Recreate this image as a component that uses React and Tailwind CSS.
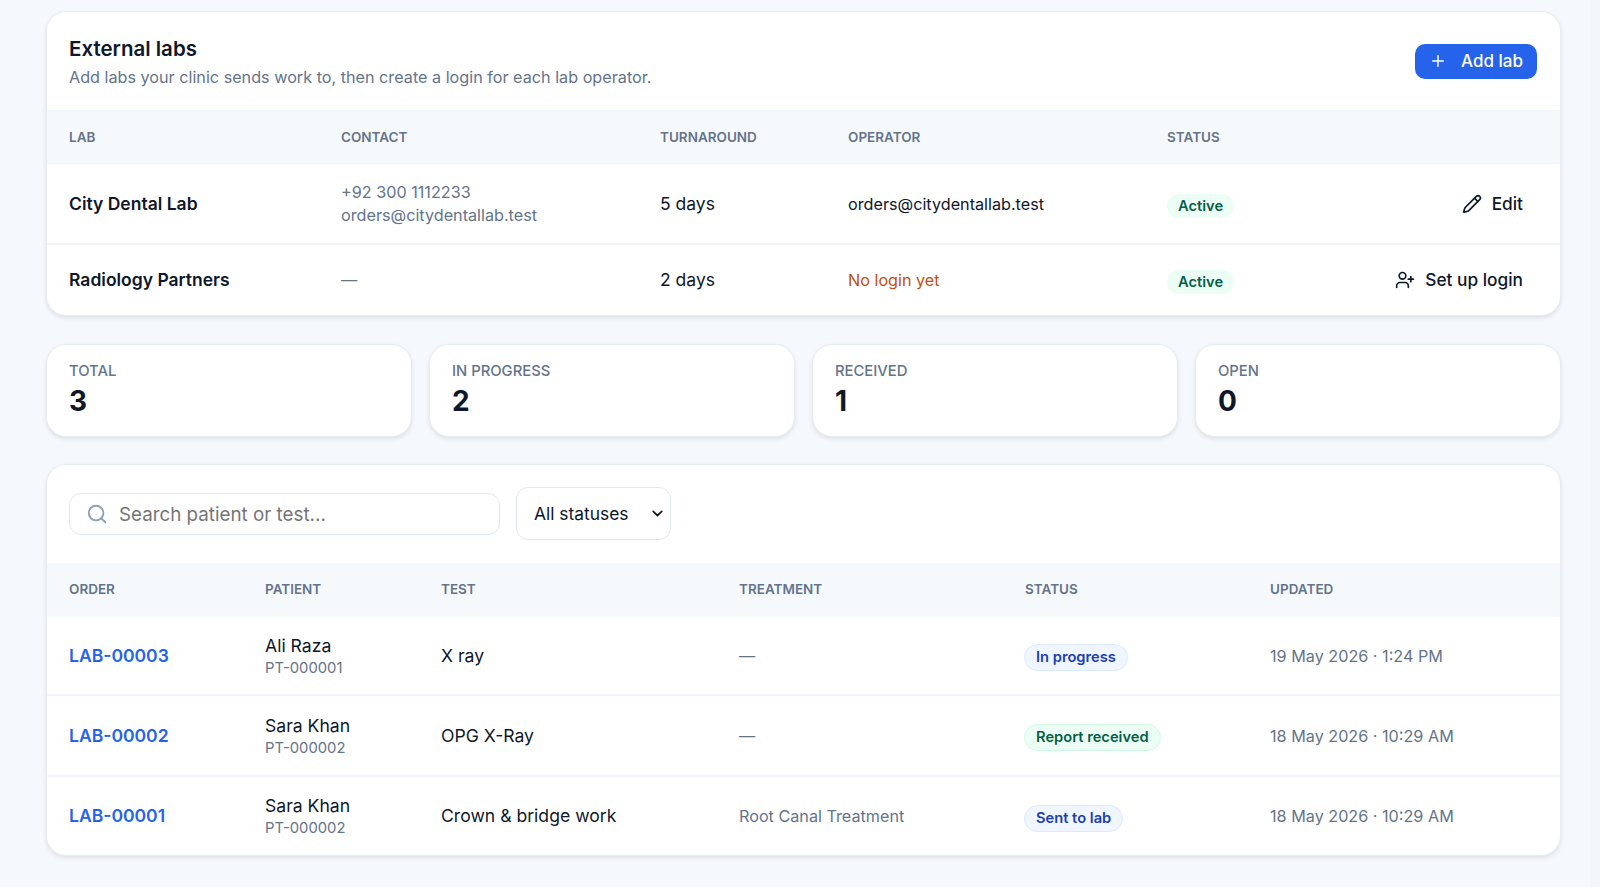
import { ChevronDown, Pencil, Plus, Search, UserPlus } from "lucide-react";

const labs = [
  {
    name: "City Dental Lab",
    phone: "+92 300 1112233",
    email: "orders@citydentallab.test",
    turnaround: "5 days",
    operator: "orders@citydentallab.test",
    action: "Edit",
  },
  {
    name: "Radiology Partners",
    turnaround: "2 days",
    action: "Set up login",
  },
];

const stats = [
  { label: "Total", value: 3 },
  { label: "In progress", value: 2 },
  { label: "Received", value: 1 },
  { label: "Open", value: 0 },
];

const orders = [
  { id: "LAB-00003", patient: "Ali Raza", code: "PT-000001", test: "X ray", status: "In progress", updated: "19 May 2026 · 1:24 PM", height: "h-[78px]" },
  { id: "LAB-00002", patient: "Sara Khan", code: "PT-000002", test: "OPG X-Ray", status: "Report received", updated: "18 May 2026 · 10:29 AM", height: "h-[81px]" },
  { id: "LAB-00001", patient: "Sara Khan", code: "PT-000002", test: "Crown & bridge work", treatment: "Root Canal Treatment", status: "Sent to lab", updated: "18 May 2026 · 10:29 AM", height: "h-[79px]" },
];

const Th = ({ className = "", children }) => (
  <th className={`text-left text-[13.5px] font-semibold uppercase text-[#64748b] ${className}`}>{children}</th>
);

const Card = ({ className = "", children }) => (
  <div className={`rounded-[20px] border border-[#e8edf3] bg-white shadow-[0_2px_4px_rgba(15,23,42,0.1)] ${className}`}>
    {children}
  </div>
);

const StatusBadge = ({ status }) => (
  <span
    className={`-ml-[1px] inline-flex h-[27px] items-center rounded-full border px-[11px] text-[14.7px] font-semibold ${
      status === "Report received"
        ? "border-[#d1fae5] bg-[#ecfdf5] text-[#065f46]"
        : "border-[#dbeafe] bg-[#eff6ff] text-[#1e40af]"
    }`}
  >
    {status}
  </span>
);

export default function App() {
  return (
    <div className="flex min-h-[887px] bg-[#f2f6fa] font-['Inter',sans-serif] text-[16.2px] text-[#0f172a]">
      <div className="flex w-[1590px] flex-col gap-[27px] bg-[#f5f8fc] pb-[31px] pl-[46px] pr-[29px] pt-[11px]">
        {/* External labs */}
        <Card className="overflow-hidden">
          <div className="flex h-[98px] items-center justify-between pl-[22px] pr-[23px]">
            <div className="pt-[4px]">
              <h2 className="text-[20.5px] font-semibold leading-[28px]">External labs</h2>
              <p className="leading-[28px] text-[#64748b]">
                Add labs your clinic sends work to, then create a login for each lab operator.
              </p>
            </div>
            <button className="flex h-[35px] w-[122px] items-center justify-center gap-[14px] rounded-[10px] bg-[#2563eb] text-[17px] font-medium text-white">
              <Plus size={18} />
              <span className="pt-[1px]">Add lab</span>
            </button>
          </div>
          <table className="w-full table-fixed">
            <thead>
              <tr className="h-[53px] border-y border-[#f1f5f9] bg-[#f6f9fc]">
                <Th className="w-[294px] pl-[22px]">Lab</Th>
                <Th className="w-[319px]">Contact</Th>
                <Th className="w-[188px]">Turnaround</Th>
                <Th className="w-[319px]">Operator</Th>
                <Th>Status</Th>
                <Th className="w-[200px]" />
              </tr>
            </thead>
            <tbody>
              {labs.map((lab, i) => (
                <tr key={lab.name} className={i === 0 ? "h-[80px] border-b-2 border-[#f1f5f9]" : "h-[71px]"}>
                  <td className="pl-[22px] pt-[2px] text-[17.5px] font-semibold">{lab.name}</td>
                  <td className="pt-[2px] text-[#64748b]">
                    {lab.phone ? (
                      <>
                        <div className="leading-[23px]">{lab.phone}</div>
                        <div className="leading-[23px]">{lab.email}</div>
                      </>
                    ) : (
                      "—"
                    )}
                  </td>
                  <td className="pt-[2px] text-[17.5px]">{lab.turnaround}</td>
                  <td className="pt-[2px]">{lab.operator || <span className="text-[#c2500c]">No login yet</span>}</td>
                  <td className="pt-[2px]">
                    <span className="mt-[3px] inline-flex h-[24px] items-center rounded-full bg-[#ecfdf5] px-[11px] text-[14.7px] font-semibold text-[#065f46]">
                      Active
                    </span>
                  </td>
                  <td className="pr-[37px] pt-[1px]">
                    <div className="flex items-center justify-end gap-[10px] text-[17.3px] font-medium">
                      {lab.action === "Edit" ? <Pencil size={20} /> : <UserPlus size={20} />}
                      {lab.action}
                    </div>
                  </td>
                </tr>
              ))}
            </tbody>
          </table>
        </Card>

        {/* Stats */}
        <div className="mt-[1px] grid grid-cols-4 gap-[17px]">
          {stats.map((s) => (
            <Card key={s.label} className="h-[93px] pl-[22px] pt-[16px]">
              <div className="text-[14.8px] font-medium uppercase leading-[20px] text-[#64748b]">{s.label}</div>
              <div className="mt-[2px] text-[28px] font-bold leading-[36px]">{s.value}</div>
            </Card>
          ))}
        </div>

        {/* Orders */}
        <Card className="overflow-hidden">
          <div className="flex h-[98px] items-center gap-[16px] pl-[22px]">
            <div className="flex h-[42px] w-[431px] items-center gap-[11px] rounded-[12px] border border-[#e2e8f0] pl-[16px]">
              <Search size={22} className="text-[#8aa0ba]" />
              <input
                className="w-[300px] bg-transparent pt-[3px] text-[18.8px] outline-none placeholder:text-[#757575]"
                placeholder="Search patient or test..."
              />
            </div>
            <div className="relative">
              <select className="h-[53px] w-[155px] appearance-none rounded-[12px] border border-[#e2e8f0] bg-white pl-[17px] pt-[2px] text-[17.4px] outline-none">
                <option>All statuses</option>
              </select>
              <ChevronDown size={17} strokeWidth={2.4} className="pointer-events-none absolute right-[5px] top-[18px]" />
            </div>
          </div>
          <table className="w-full table-fixed">
            <thead>
              <tr className="h-[54px] bg-[#f6f9fc]">
                <Th className="w-[218px] pl-[22px]">Order</Th>
                <Th className="w-[176px]">Patient</Th>
                <Th className="w-[298px]">Test</Th>
                <Th className="w-[286px]">Treatment</Th>
                <Th className="w-[245px]">Status</Th>
                <Th>Updated</Th>
              </tr>
            </thead>
            <tbody>
              {orders.map((o, i) => (
                <tr key={o.id} className={`${o.height} ${i < 2 ? "border-b-2 border-[#f1f5f9]" : ""}`}>
                  <td className="pl-[22px] pt-[2px] text-[17.55px] font-semibold text-[#2563eb]">{o.id}</td>
                  <td className="pt-[2px]">
                    <div className="text-[17.6px] leading-[24px]">{o.patient}</div>
                    <div className="text-[14.8px] leading-[21px] text-[#64748b]">{o.code}</div>
                  </td>
                  <td className="pt-[2px] text-[17.6px]">{o.test}</td>
                  <td className="pt-[2px] text-[#64748b]">{o.treatment || "—"}</td>
                  <td className="pt-[5px]"><StatusBadge status={o.status} /></td>
                  <td className="pt-[2px] text-[#64748b]">{o.updated}</td>
                </tr>
              ))}
            </tbody>
          </table>
        </Card>
      </div>
    </div>
  );
}
